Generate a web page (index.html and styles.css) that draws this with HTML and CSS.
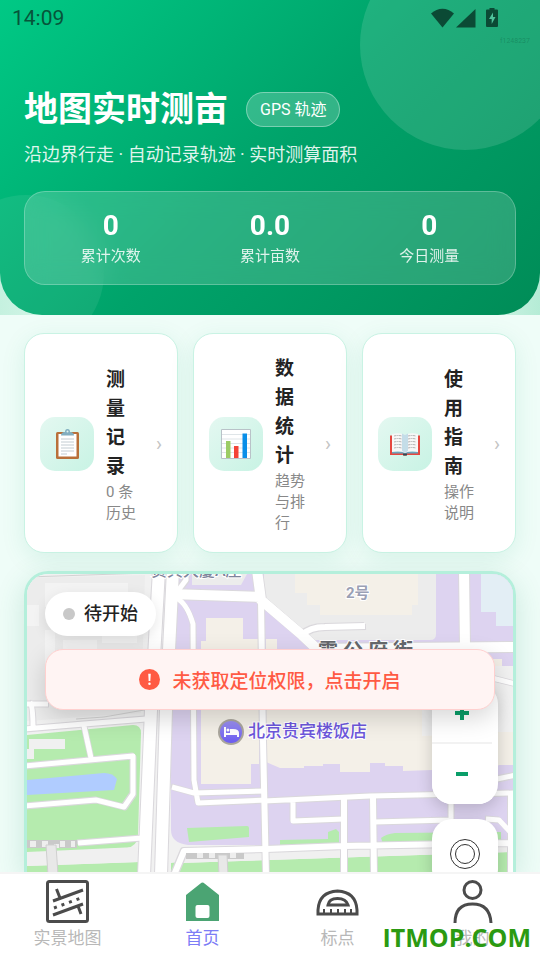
FILE: index.html
```html
<!DOCTYPE html>
<html lang="zh-CN">
<head>
    <meta charset="UTF-8">
    <meta name="viewport" content="width=device-width, initial-scale=1.0">
    <title>地图实时测亩</title>
    <link rel="stylesheet" href="styles.css">
</head>
<body>

<div class="app">
    <div class="hero-wrap">
        <header class="hero">
            <div class="status-bar">
                <span class="clock">14:09</span>
                <svg class="status-icons" viewBox="0 0 68 20" aria-hidden="true">
                    <path d="M0 5.5C7-.8 16-.8 23 5.5L11.5 19.500z"/>
                    <path d="M25 19.500H44.500V1z"/>
                    <path d="M58.500 0h5v1.500h2.500q1 0 1 1V18q0 1-1 1H56q-1 0-1-1V2.500q0-1 1-1h2.500z"/>
                    <path class="bolt" d="M62 4.500L58 11h2.700v5L64.500 9H62z"/>
                </svg>
            </div>
            <span class="device-id">f1248237</span>

            <div class="title-row">
                <h1>地图实时测亩</h1>
                <span class="badge">GPS 轨迹</span>
            </div>
            <p class="subtitle">沿边界行走 · 自动记录轨迹 · 实时测算面积</p>

            <div class="stats">
                <div class="stat"><strong>0</strong><span>累计次数</span></div>
                <div class="stat"><strong>0.0</strong><span>累计亩数</span></div>
                <div class="stat"><strong>0</strong><span>今日测量</span></div>
            </div>
        </header>
    </div>

    <main class="content">
        <nav class="cards">
            <a class="card" href="#records">
                <span class="card-icon">
                    <svg viewBox="0 0 32 32" aria-hidden="true">
                        <rect x="5" y="4" width="23" height="27" rx="1.500" fill="#b9703a"/>
                        <path d="M7.500 6h18v22.500h-18z" fill="#fff"/>
                        <path d="M10 11h13M10 14h13M10 17h13M10 20h13M10 23h13M10 26h6" stroke="#c3ccd2" stroke-width="1"/>
                        <path d="M10 7.500q0-3 3-3.500h1q0-3 2.500-3t2.500 3h1q3 .5 3 3.500z" fill="#82aec0"/>
                        <circle cx="16.500" cy="3.500" r="1" fill="#e1f4f0"/>
                    </svg>
                </span>
                <span class="card-text"><b>测量记录</b><small>0 条历史</small></span>
                <span class="arrow">›</span>
            </a>
            <a class="card" href="#statistics">
                <span class="card-icon">
                    <svg viewBox="0 0 32 32" aria-hidden="true">
                        <path d="M1.500 1.500h29v29h-29z" fill="#fff" stroke="#b9c2c8"/>
                        <path d="M2 6.500h28M2 11h28M2 15.500h28M2 20h28M2 24.500h28" stroke="#dfe5e8"/>
                        <path d="M6 13h4.500v17H6z" fill="#9ccc65"/>
                        <path d="M14 18h4.500v12H14z" fill="#f44336"/>
                        <path d="M22.500 5.500H27V30h-4.500z" fill="#0a8fe8"/>
                    </svg>
                </span>
                <span class="card-text"><b>数据统计</b><small>趋势与排行</small></span>
                <span class="arrow">›</span>
            </a>
            <a class="card" href="#guide">
                <span class="card-icon">
                    <svg viewBox="0 0 32 32" aria-hidden="true">
                        <path d="M1 7.500h2v17h26v-17h2V27H18q-2 1.500-4 0H1z" fill="#e5463f"/>
                        <path d="M3 23.500h11l2 2 2-2h11v2H18l-2 2-2-2H3z" fill="#6ba3bd"/>
                        <path d="M14 25.500h4v2h-4z" fill="#37474f"/>
                        <path d="M3 6q8-2 13 1v18q-5-3-13-1z" fill="#f7f7f7"/>
                        <path d="M29 6q-8-2-13 1v18q5-3 13-1z" fill="#f7f7f7"/>
                        <path d="M13 5.500l3 1.500 3-1.500V23l-3 2-3-2z" fill="#c4dde8"/>
                        <path d="M5 8q4-1 8 0M5 11q4-1 8 0M5 14q4-1 8 0M5 17q4-1 8 0M5 20q4-1 8 0M19 8q4-1 8 0M19 11q4-1 8 0M19 14q4-1 8 0M19 17q4-1 8 0M19 20q4-1 8 0" fill="none" stroke="#b5b5b5" stroke-dasharray="2 .5"/>
                    </svg>
                </span>
                <span class="card-text"><b>使用指南</b><small>操作说明</small></span>
                <span class="arrow">›</span>
            </a>
        </nav>

        <section class="map-card">
            <svg class="map" viewBox="27 574 486 298" preserveAspectRatio="xMidYMin slice" aria-label="地图">
                <defs>
                    <g id="roads">
                        <path stroke-width="12" d="M159 570L151 710 144 875"/>
                        <path stroke-width="12" d="M173 570L166 710 161 875"/>
                        <path stroke-width="10" d="M170 594L262 597M257 570L261 600 302 635 318 650M464 570L465 646M312 649L400 648 516 647"/>
                        <path stroke-width="6" d="M302 635Q310 627 325 627L365 626"/>
                        <path stroke-width="5" d="M174 596L186 580 186 572M176 598Q187 603 193 624L194 780 198 803 267 800M172 787L194 793 267 791"/>
                        <path stroke-width="6" d="M261 600L263 740 266 875"/>
                        <path stroke-width="5" d="M264 801L370 796 516 793M293 800V821L344 819M374 822L450 820M451 797V822M486 819L499 820 514 836M497 779L516 775"/>
                        <path stroke-width="6" d="M344 799V875M373 798L374 875M511 795V875M174 875L184 851 266 849 344 846 516 843"/>
                        <path stroke-width="5" d="M25 729L84 724 146 719M25 766L133 756 133 794 124 807 96 800 25 806M84 726L91 758M78 843L142 838M25 704H48M30 702Q33 706 33 728M492 678L516 684"/>
                    </g>
                    <linearGradient id="pin" x1="0" y1="0" x2="0" y2="1">
                        <stop stop-color="#9a8ff0"/><stop offset="1" stop-color="#6b5cf0"/>
                    </linearGradient>
                </defs>
                <path fill="#f1f1f1" d="M27 574h486v298H27z"/>

                <!-- blocks and buildings -->
                <path fill="#ececec" d="M27 578l118-3-4 138-114 8z"/>
                <path fill="#f3f3f3" d="M45 583h83v24H45zM27 605h12v21H27zM45 630h10v60H45zM63 640h34v12H63zM102 632h35v11h-35z"/>
                <path fill="none" stroke="#d2d2d2" d="M27 577l121-4M76 719l28-2 40-7"/>
                <path fill="#ddd3f0" d="M178 574h335v271H188q-17-2-17-15V700z"/>
                <path fill="#ececec" d="M192 574h55l-6 11h-49z"/>
                <path fill="#ececec" d="M264 574h172v60q0 6-6 6h-117l-49-44z"/>
                <path fill="#f4f0e8" d="M295 574h123v31h-6v10h-92v-10h-13v-12h-12z"/>
                <path fill="#e3eef5" d="M481 574h32v52h-17v-14h-15z"/>
                <path fill="#f4f0e8" d="M206 618h37v21h16v125h-8v20h-50V641h5z"/>
                <path fill="#f4f0e8" d="M266 639h11v20h225v105l-16 6h-54l-29 1v-5h-18v-3h-15v9h-30v-8h-17v2h-19v2h-24l-14-6z"/>
                <path fill="#f2f2f2" d="M422 666h91v66l-91 4z"/>
                <path fill="#f4f0e8" d="M498 732h15v33h-15z"/>

                <!-- parks and water -->
                <path fill="#b5ebae" d="M27 735l106-10q8 0 8 8l-3 103q-1 10-11 12l-100 5zM27 866l114-4v10H27zM171 863l10-1-7 10h-3zM180 863l333-11v20H175z"/>
                <path fill="#b5ebae" d="M187 828l60-2q2 0 2 2v9l-60 5zM280 840l48-1v-7l8-3 3 3v11l-59 3zM381 838q5-4 14-5l106-1v8l-118 4z"/>
                <path fill="#b0ccff" d="M27 780l77-7q9 0 13 6l-3 11-87 5z"/>
                <path fill="#f0f0f0" d="M29 739h36v10H34v10h-7v-10h2zM27 852l110-5v15l-110 4zM185 854l328-11v9l-333 11z"/>

                <g class="road-edge"><use href="#roads"/></g>
                <g class="road"><use href="#roads"/></g>

                <!-- crossings -->
                <path fill="#c9c9c9" d="M27 840h50v8H27zM186 853h58v6h-58z"/>
                <path fill="#eee" d="M30 841h6v6h-6zM42 841h6v6h-6zM54 844h5v4h-5zM60 841h5v6h-5zM71 841h4v6h-4zM197 853h6v5h-6zM209 853h6v5h-6zM230 853h6v5h-6z"/>
                <path fill="#e8e8e8" stroke="#cfcfcf" d="M46 845h10l2 30H48zM218 855h9l1 20h-9z"/>

                <g class="map-text">
                    <text class="place" x="151" y="576">贵宾大厦A座</text>
                    <text class="house-no" x="346" y="598">2号</text>
                    <text class="street" x="318 343 368 393" y="658">霞公府街</text>
                    <text class="hotel" x="248" y="737">北京贵宾楼饭店</text>
                </g>
                <circle cx="231" cy="732" r="13" fill="#aaa69d"/>
                <circle cx="231" cy="732" r="11" fill="url(#pin)"/>
                <path fill="#fff" d="M224 727h2v6h4v-4h3q6 0 6 4v4h-2v-2h-11v2h-2z"/>
                <circle cx="228" cy="730" r="1.500" fill="#fff"/>
            </svg>

            <div class="state"><i class="dot"></i>待开始</div>

            <div class="controls">
                <div class="zoom">
                    <button type="button" aria-label="放大"><svg viewBox="0 0 16 16"><path d="M1 8h14M8 1v14"/></svg></button>
                    <button type="button" aria-label="缩小"><svg viewBox="0 0 16 16"><path d="M2 8h12"/></svg></button>
                </div>
                <button class="locate" type="button" aria-label="定位">
                    <svg viewBox="0 0 32 32"><circle cx="16" cy="16" r="14.500"/><circle cx="16" cy="16" r="9.500"/></svg>
                </button>
            </div>

            <button class="alert" type="button">
                <svg viewBox="0 0 20 20" aria-hidden="true">
                    <circle cx="10" cy="10" r="10" fill="#ff5a43"/>
                    <path d="M8.800 4.500h2.400l-.4 7H9.200z" fill="#fff"/><circle cx="10" cy="14" r="1.200" fill="#fff"/>
                </svg>
                未获取定位权限，点击开启
            </button>
        </section>
    </main>

    <nav class="tab-bar">
        <a class="tab" href="#scene">
            <svg viewBox="0 0 44 44" aria-hidden="true">
                <rect x="1.500" y="1.500" width="40" height="40" rx="2" stroke-width="3"/>
                <path stroke-width="3" d="M7 21L37 10M7 35L37 24M10.500 9L14 18M32 26L35 34"/>
                <path stroke-width="3" stroke-dasharray="3 5" d="M8 28L35 18"/>
            </svg>
            <span>实景地图</span>
        </a>
        <a class="tab active" href="#home">
            <svg viewBox="0 0 44 44" aria-hidden="true">
                <path fill="#4ba473" stroke="none" d="M21.500 2.500q1 0 2 1L38 15v26H5V15L19.500 3.500q1-1 2-1z"/>
                <rect x="14.500" y="25" width="14" height="13" rx="2" fill="#fff" stroke="none"/>
            </svg>
            <span>首页</span>
        </a>
        <a class="tab" href="#points">
            <svg viewBox="0 0 44 44" aria-hidden="true">
                <path stroke-width="3" d="M2 34V30Q3 12 21.500 11 40 12 41 30V34z"/>
                <path stroke-width="3" d="M12 25Q13 18.500 21.500 18.500T32 25z"/>
                <path stroke-width="2" d="M8 34V29M15 34V29M22 34V29M29 34V29M35 34V29"/>
            </svg>
            <span>标点</span>
        </a>
        <a class="tab" href="#mine">
            <svg viewBox="0 0 44 44" aria-hidden="true">
                <circle cx="21.500" cy="10" r="8.500" stroke-width="3"/>
                <path stroke-width="3" d="M4 43Q4 24 21.500 24T40 43"/>
            </svg>
            <span>我的</span>
        </a>
        <span class="site-mark">ITMOP.COM</span>
    </nav>
</div>

</body>
</html>
```

FILE: styles.css
```css
* {
    box-sizing: border-box;
}

body {
    margin: 0;
    font-family: Roboto, "Noto Sans CJK SC", sans-serif;
    color: #222;
    background-color: #effdf8;
}

a {
    color: inherit;
    text-decoration: none;
}

button {
    border: none;
    padding: 0;
    font-family: inherit;
    cursor: pointer;
}

.app {
    display: flex;
    flex-direction: column;
    height: 100vh;
    overflow: hidden;
}

/* header */
.hero-wrap {
    flex: none;
    overflow: hidden;
    background: linear-gradient(to right, #c5f1df, #e9fbf4 20%, #e9fbf4 80%, #b5ecd6);
}

.hero {
    position: relative;
    overflow: hidden;
    padding: 0 24px 30px;
    color: #fff;
    background: linear-gradient(135deg, #00c985 0%, #00a36a 50%, #008c57 100%);
    border-radius: 0 0 42px 42px;
}

.hero::before,
.hero::after {
    content: "";
    position: absolute;
    border-radius: 50%;
}

.hero::before {
    top: -60px;
    right: -30px;
    width: 210px;
    height: 210px;
    background-color: rgba(255, 255, 255, 0.12);
}

.hero::after {
    left: -52px;
    bottom: -36px;
    width: 156px;
    height: 156px;
    background-color: rgba(255, 255, 255, 0.07);
}

.status-bar {
    position: relative;
    display: flex;
    justify-content: space-between;
    align-items: center;
    height: 35px;
    margin: 0 -12px;
    padding-right: 29px;
}

.clock {
    font-size: 21px;
    color: #07543a;
}

.status-icons {
    width: 68px;
    height: 20px;
    fill: #0b4a35;
}

.status-icons .bolt {
    fill: #4fc29b;
}

.device-id {
    position: absolute;
    top: 35px;
    right: 10px;
    font-size: 7px;
    line-height: 12px;
    color: rgba(0, 60, 40, 0.25);
}

.title-row {
    position: relative;
    display: flex;
    align-items: center;
    gap: 18px;
    margin-top: 50px;
}

h1 {
    margin: 0;
    font-size: 34px;
    line-height: 48px;
}

.badge {
    padding: 0 13px;
    font-size: 16px;
    line-height: 33px;
    background-color: rgba(255, 255, 255, 0.2);
    border: 1px solid rgba(255, 255, 255, 0.35);
    border-radius: 18px;
}

.subtitle {
    margin: 9px 0 0;
    font-size: 18px;
    line-height: 26px;
    color: rgba(255, 255, 255, 0.88);
}

.stats {
    position: relative;
    z-index: 1;
    display: grid;
    grid-template-columns: repeat(3, 1fr);
    margin-top: 23px;
    padding: 16px 6px;
    background-color: rgba(255, 255, 255, 0.16);
    border: 1px solid rgba(255, 255, 255, 0.25);
    border-radius: 21px;
    backdrop-filter: blur(12px);
}

.stat {
    display: flex;
    flex-direction: column;
    align-items: center;
}

.stat strong {
    font-size: 28px;
    line-height: 36px;
}

.stat span {
    font-size: 15px;
    line-height: 24px;
    color: rgba(255, 255, 255, 0.85);
}

/* content */
.content {
    display: flex;
    flex-direction: column;
    gap: 18px;
    flex: 1;
    min-height: 0;
    padding: 18px 24px 0;
    overflow: hidden;
}

.cards {
    display: grid;
    grid-template-columns: repeat(3, 1fr);
    gap: 15px;
}

.card {
    display: flex;
    align-items: center;
    gap: 12px;
    padding: 20px 15px 18px;
    background-color: #fff;
    border: 1px solid #c9f3e4;
    border-radius: 20px;
    box-shadow: 0 6px 24px rgba(0, 150, 100, 0.1);
}

.card-icon {
    display: flex;
    align-items: center;
    justify-content: center;
    flex: none;
    width: 54px;
    height: 54px;
    background: linear-gradient(135deg, #e4f8f1, #c8f3e4);
    border-radius: 15px;
}

.card-icon svg {
    width: 32px;
    height: 32px;
}

.card-text {
    display: flex;
    flex-direction: column;
    gap: 1px;
    flex: 1;
    min-width: 0;
}

.card-text b {
    font-size: 19px;
    line-height: 29px;
}

.card-text small {
    font-size: 15px;
    line-height: 21px;
    color: #888;
}

.arrow {
    font-size: 20px;
    line-height: 28px;
    color: #c4c4c4;
}

/* map */
.map-card {
    position: relative;
    flex: 1;
    min-height: 0;
    overflow: hidden;
    border: 3px solid #b4efdb;
    border-bottom: none;
    border-radius: 24px 24px 0 0;
    box-shadow: 0 8px 30px rgba(0, 120, 80, 0.16);
}

.map {
    display: block;
    width: 100%;
    height: 100%;
}

.road-edge,
.road {
    fill: none;
    stroke: #dad8dc;
    stroke-linejoin: round;
}

.road-edge {
    filter: drop-shadow(1px 1px 0 #dad8dc) drop-shadow(-1px -1px 0 #dad8dc);
}

.road {
    stroke: #fff;
}

.map-text {
    font-weight: 500;
    stroke: #fff;
    stroke-width: 2px;
    paint-order: stroke;
}

.place {
    font-size: 16px;
    fill: #7f849b;
}

.house-no {
    font-size: 15px;
    font-weight: 700;
    fill: #9aa0b4;
}

.street {
    font-size: 20px;
    font-weight: 700;
    fill: #66686d;
}

.hotel {
    font-size: 17px;
    fill: #6d57dc;
}

.state {
    position: absolute;
    top: 18px;
    left: 18px;
    display: flex;
    align-items: center;
    gap: 9px;
    padding: 0 18px;
    font-size: 18px;
    font-weight: 500;
    line-height: 44px;
    background-color: #fff;
    border-radius: 22px;
    box-shadow: 0 4px 14px rgba(0, 0, 0, 0.1);
}

.dot {
    width: 12px;
    height: 12px;
    background-color: #c8c8c8;
    border-radius: 50%;
}

.controls {
    position: absolute;
    top: 110px;
    right: 15px;
    display: flex;
    flex-direction: column;
    gap: 15px;
    width: 66px;
}

.zoom,
.locate {
    overflow: hidden;
    background-color: #fff;
    border-radius: 20px;
    box-shadow: 0 5px 16px rgba(0, 0, 0, 0.18);
}

.zoom button {
    display: flex;
    align-items: center;
    justify-content: center;
    width: 60px;
    height: 60px;
    background-color: #fff;
}

.zoom button:first-child {
    border-bottom: 2px solid #f2f2f2;
}

.zoom svg {
    width: 16px;
    height: 16px;
    stroke: #0a9e69;
    stroke-width: 4;
}

.locate {
    display: flex;
    align-items: center;
    justify-content: center;
    height: 70px;
}

.locate svg {
    width: 32px;
    height: 32px;
    fill: none;
    stroke: #333;
    stroke-width: 1;
}

.alert {
    position: absolute;
    top: 75px;
    left: 18px;
    right: 18px;
    display: flex;
    align-items: center;
    justify-content: center;
    gap: 12px;
    height: 61px;
    font-size: 19px;
    font-weight: 500;
    color: #ff5a43;
    background-color: #fff4f3;
    border: 1px solid #ffd0cf;
    border-radius: 18px;
    box-shadow: 0 8px 24px rgba(0, 0, 0, 0.16);
}

.alert svg {
    width: 21px;
    height: 21px;
}

/* bottom tabs */
.tab-bar {
    position: relative;
    display: grid;
    grid-template-columns: repeat(4, 1fr);
    flex: none;
    padding: 6px 0 9px;
    background-color: #fff;
    border-top: 2px solid #f5f5f5;
}

.tab {
    display: flex;
    flex-direction: column;
    align-items: center;
    gap: 2px;
    font-size: 17px;
    line-height: 25px;
    color: #b8b8b8;
}

.tab svg {
    width: 44px;
    height: 44px;
    fill: none;
    stroke: #4b4b4b;
}

.tab.active {
    color: #7d7df6;
}

.site-mark {
    position: absolute;
    right: 9px;
    bottom: 7px;
    font-family: "Open Sans", sans-serif;
    font-size: 25px;
    font-weight: 700;
    line-height: 32px;
    color: #2b9a12;
}
```
